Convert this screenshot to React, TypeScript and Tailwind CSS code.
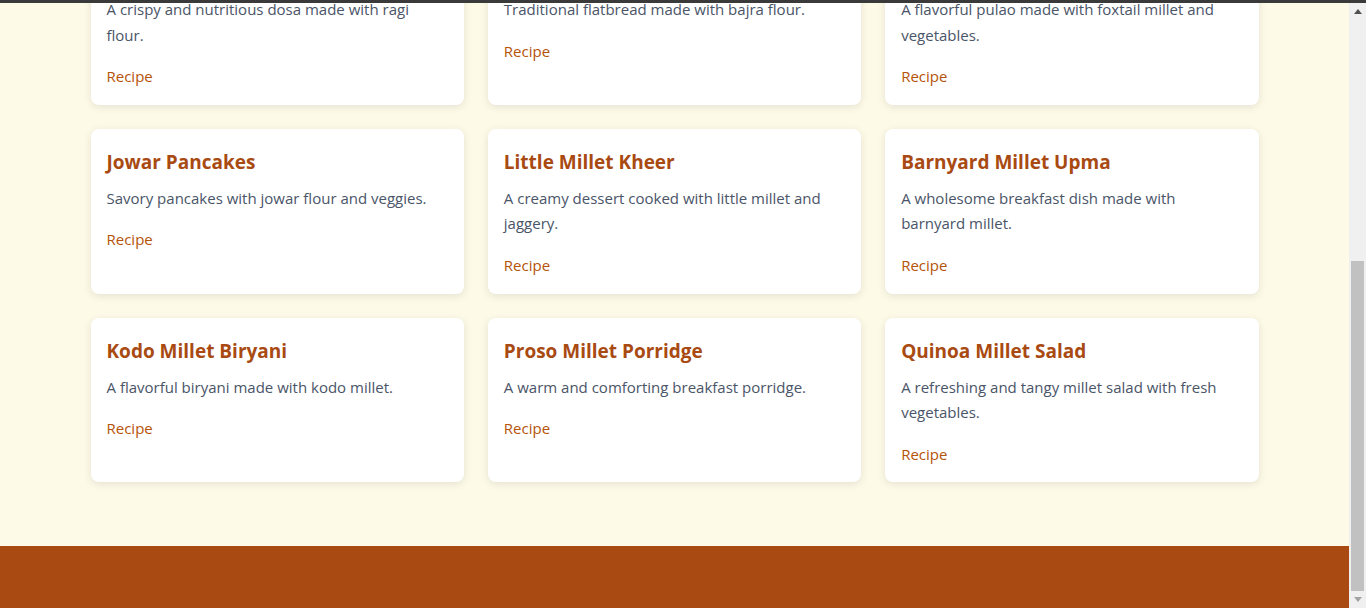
import React from "react";

const recipes = [
  { title: "Ragi Dosa", desc: "A crispy and nutritious dosa made with ragi flour." },
  { title: "Bajra Roti", desc: "Traditional flatbread made with bajra flour." },
  { title: "Foxtail Millet Pulao", desc: "A flavorful pulao made with foxtail millet and vegetables." },
  { title: "Jowar Pancakes", desc: "Savory pancakes with jowar flour and veggies." },
  { title: "Little Millet Kheer", desc: "A creamy dessert cooked with little millet and jaggery." },
  { title: "Barnyard Millet Upma", desc: "A wholesome breakfast dish made with barnyard millet." },
  { title: "Kodo Millet Biryani", desc: "A flavorful biryani made with kodo millet." },
  { title: "Proso Millet Porridge", desc: "A warm and comforting breakfast porridge." },
  { title: "Quinoa Millet Salad", desc: "A refreshing and tangy millet salad with fresh vegetables." },
];

export default function App() {
  return (
    <div
      className="h-[608px] w-[1366px] overflow-hidden flex flex-col bg-[#fefae8]"
      style={{ fontFamily: '"Open Sans", "Noto Sans", sans-serif' }}
    >
      <div className="h-[3px] bg-[#3a3a3a] shrink-0" />
      <div className="flex flex-1 min-h-0">
        <div className="flex-1 min-w-0 overflow-hidden flex flex-col">
          <section className="-mt-[63px] pb-16">
            <div className="max-w-[1200px] mx-auto px-4 grid grid-cols-3 gap-6">
              {recipes.map((r) => (
                <div key={r.title} className="bg-white rounded-lg pt-[17px] px-4 pb-[15px] shadow-[0_2px_8px_rgba(0,0,0,0.1)]">
                  <h3 className="text-[19px] font-bold leading-[32px] text-[#a84a12]">{r.title}</h3>
                  <p className="mt-2 text-[15px] leading-[25.6px] text-[#4a5568]">{r.desc}</p>
                  <a href="#" className="block mt-4 text-[15px] leading-[25.6px] text-[#b45309]">
                    Recipe
                  </a>
                </div>
              ))}
            </div>
          </section>
          <footer className="flex-1 bg-[#a84a12]" />
        </div>
        <div className="w-[17px] shrink-0 bg-[#f0f0f0] flex flex-col items-center">
          <div className="h-[17px] w-full flex items-center justify-center">
            <svg width="8" height="5" viewBox="0 0 8 5"><path d="M0 5 L4 0 L8 5 Z" fill="#505050" /></svg>
          </div>
          <div className="flex-1 w-full flex flex-col justify-end px-[2px]">
            <div className="h-[330px] bg-[#c1c1c1]" />
          </div>
          <div className="h-[17px] w-full flex items-center justify-center">
            <svg width="8" height="5" viewBox="0 0 8 5"><path d="M0 0 L8 0 L4 5 Z" fill="#a3a3a3" /></svg>
          </div>
        </div>
      </div>
    </div>
  );
}
